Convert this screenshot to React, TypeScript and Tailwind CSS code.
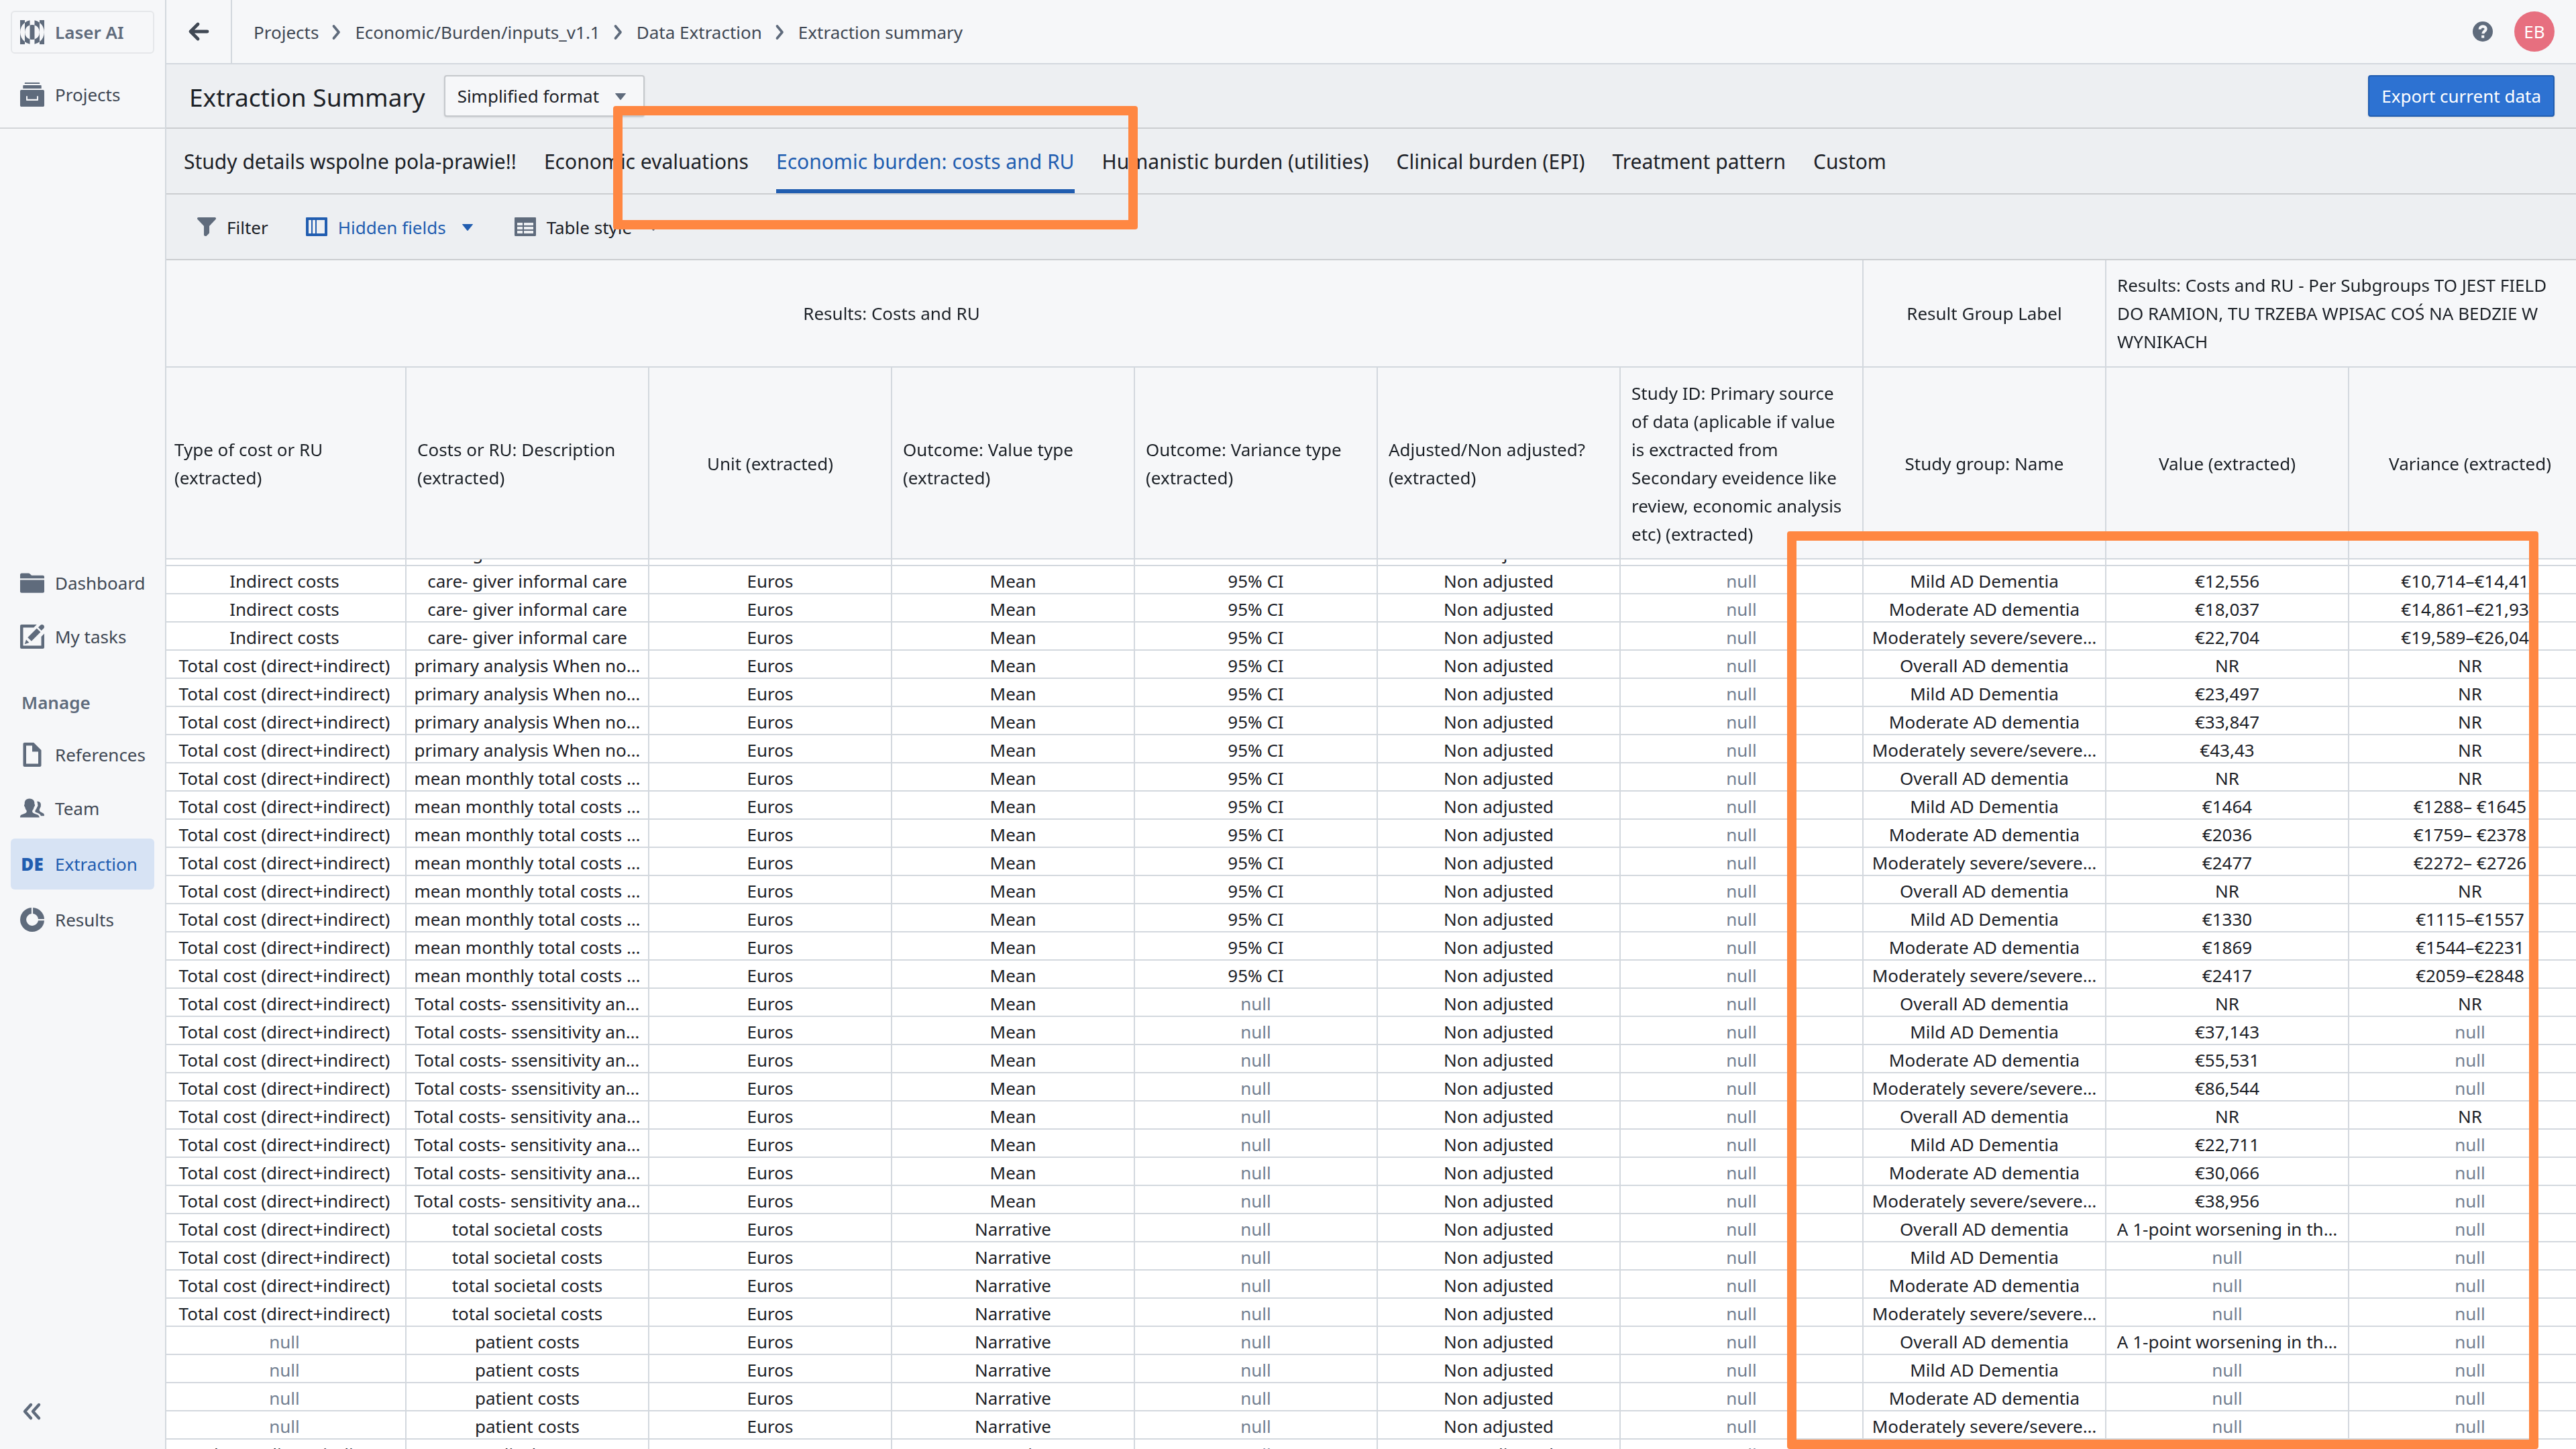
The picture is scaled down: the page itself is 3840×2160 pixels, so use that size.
import { useLayoutEffect, useRef, type ReactNode } from "react";

const TOTAL = "Total cost (direct+indirect)";
const OVERALL = "Overall AD dementia";
const MILD = "Mild AD Dementia";
const MODERATE = "Moderate AD dementia";
const SEVERE = "Moderately severe/severe…";
const WORSENING = "A 1-point worsening in th…";

const indirect = ["Indirect costs", "care- giver informal care", "Euros", "Mean", "95% CI"];
const primary = [TOTAL, "primary analysis When no…", "Euros", "Mean", "95% CI"];
const monthly = [TOTAL, "mean monthly total costs …", "Euros", "Mean", "95% CI"];
const ssensitivity = [TOTAL, "Total costs- ssensitivity an…", "Euros", "Mean", "null"];
const sensitivity = [TOTAL, "Total costs- sensitivity ana…", "Euros", "Mean", "null"];
const societal = [TOTAL, "total societal costs", "Euros", "Narrative", "null"];
const patient = ["null", "patient costs", "Euros", "Narrative", "null"];
const medical = [TOTAL, "medical costs", "Euros", "Narrative", "null"];

const data: [string[], string, string, string][] = [
    [indirect, OVERALL, "NR", "NR"],
    [indirect, MILD, "€12,556", "€10,714–€14,417"],
    [indirect, MODERATE, "€18,037", "€14,861–€21,939"],
    [indirect, SEVERE, "€22,704", "€19,589–€26,042"],
    [primary, OVERALL, "NR", "NR"],
    [primary, MILD, "€23,497", "NR"],
    [primary, MODERATE, "€33,847", "NR"],
    [primary, SEVERE, "€43,43", "NR"],
    [monthly, OVERALL, "NR", "NR"],
    [monthly, MILD, "€1464", "€1288– €1645"],
    [monthly, MODERATE, "€2036", "€1759– €2378"],
    [monthly, SEVERE, "€2477", "€2272– €2726"],
    [monthly, OVERALL, "NR", "NR"],
    [monthly, MILD, "€1330", "€1115–€1557"],
    [monthly, MODERATE, "€1869", "€1544–€2231"],
    [monthly, SEVERE, "€2417", "€2059–€2848"],
    [ssensitivity, OVERALL, "NR", "NR"],
    [ssensitivity, MILD, "€37,143", "null"],
    [ssensitivity, MODERATE, "€55,531", "null"],
    [ssensitivity, SEVERE, "€86,544", "null"],
    [sensitivity, OVERALL, "NR", "NR"],
    [sensitivity, MILD, "€22,711", "null"],
    [sensitivity, MODERATE, "€30,066", "null"],
    [sensitivity, SEVERE, "€38,956", "null"],
    [societal, OVERALL, WORSENING, "null"],
    [societal, MILD, "null", "null"],
    [societal, MODERATE, "null", "null"],
    [societal, SEVERE, "null", "null"],
    [patient, OVERALL, WORSENING, "null"],
    [patient, MILD, "null", "null"],
    [patient, MODERATE, "null", "null"],
    [patient, SEVERE, "null", "null"],
    [medical, OVERALL, "null", "null"],
];

const columns = [
    "Type of cost or RU (extracted)",
    "Costs or RU: Description (extracted)",
    "Unit (extracted)",
    "Outcome: Value type (extracted)",
    "Outcome: Variance type (extracted)",
    "Adjusted/Non adjusted? (extracted)",
    "Study ID: Primary source of data (aplicable if value is exctracted from Secondary eveidence like review, economic analysis etc) (extracted)",
    "Study group: Name",
    "Value (extracted)",
    "Variance (extracted)",
];

const tabs = [
    "Study details wspolne pola-prawie!!",
    "Economic evaluations",
    "Economic burden: costs and RU",
    "Humanistic burden (utilities)",
    "Clinical burden (EPI)",
    "Treatment pattern",
    "Custom",
];

const crumbs = ["Projects", "Economic/Burden/inputs_v1.1", "Data Extraction", "Extraction summary"];

function Icon({ children, className = "size-9", viewBox = "0 0 16 16" }: { children: ReactNode; className?: string; viewBox?: string }) {
    return (
        <svg viewBox={viewBox} fill="currentColor" fillRule="evenodd" className={`shrink-0 ${className}`} aria-hidden="true">
            {children}
        </svg>
    );
}

const icons = {
    logo: (
        <path d="M0 0H7V3.8A18 18 0 0 0 7 32.2V36H0zM7 3.8A18 18 0 0 1 14.5.3V7.6A11 11 0 0 0 14.5 28.4V35.7A18 18 0 0 1 7 32.2zM14.5 7.6A11 11 0 0 1 21.5 7.6V28.4A11 11 0 0 1 14.5 28.4zM29 3.8A18 18 0 0 0 21.5.3V7.6A11 11 0 0 1 21.5 28.4V35.7A18 18 0 0 0 29 32.2zM36 0H29V3.8A18 18 0 0 1 29 32.2V36H36z" />
    ),
    projects: <path d="M3.4 0h9.200c.2 0 .4.200.4.500V.9H3V.5c0-.3.200-.5.400-.5zM2.400 1.800h11.200c.3 0 .5.200.5.500V4H1.900V2.300c0-.3.200-.5.500-.5zM.8 4.900h14.400c.4 0 .8.400.8.800v9.500c0 .4-.4.800-.8.800H.8c-.4 0-.8-.4-.8-.8V5.700c0-.4.400-.8.800-.8zM4 9v2.500c0 .3.200.5.500.5h7c.3 0 .5-.2.500-.5V9h-.9v2H4.900V9z" />,
    folder: <path d="M0 2.500c0-.5.4-1 1-1h4.600c.3 0 .5.100.7.300L7.600 3H15c.6 0 1 .4 1 1v1H0zM0 6h16v7.500c0 .6-.4 1-1 1H1c-.6 0-1-.4-1-1z" />,
    tasks: <path d="M14 14H2V2h7l2-2H1C.4 0 0 .4 0 1v14c0 .6.4 1 1 1h14c.6 0 1-.4 1-1V6l-2 2zM4 10l-1 3 3-1zM11 2.500 5 8.500l2.500 2.500 6-6zM16 1.500C16 .7 15.300 0 14.500 0c-.4 0-.8.200-1.100.4L12 1.900 14.100 4l1.500-1.500c.2-.2.400-.6.400-1z" />,
    doc: <path d="M9 0H3c-.6 0-1 .4-1 1v14c0 .6.4 1 1 1h10c.6 0 1-.4 1-1V5zm3 14H4V2h4v4h4z" />,
    team: <path d="M12.800 14H0c0-.7.100-1.400.7-1.700 1.500-.7 3.300-1 3.600-2 .1-.4 0-.7-.1-1-.5-.5-.8-1.200-1-2.200-.4-.3-.6-.8-.5-1.300.1-.3.200-.5.300-.6C2.800 3.200 3.600 1.500 6.200 1.500s3.500 1.700 3.300 3.700c.2.100.3.300.3.600 0 .6-.3 1.100-.6 1.300-.2 1-.5 1.700-1 2.200-.1.300-.2.600-.1 1 .3 1 2.200 1.300 3.700 2 .6.300.9 1 1 1.700zM16 13h-2.300c-.3-1-.8-1.400-2-1.900l-1.500-.6c-.4-.3-.3-1 0-1.500.5-.6.900-1.300 1-1.800.5-.5.700-1.200.4-1.900 0-.5 0-1.300-.5-1.800C12.900 3.200 14 4.500 13.700 6c.1.600-.1 1.300-.5 1.700-.1.500-.3.900-.5 1.300.1 1.800 2.900 1.700 3.200 3z" />,
    donut: <path d="M7.500 0v4A4 4 0 1 0 12 8.500h4A8 8 0 1 1 7.500 0zM8.500 0A8 8 0 0 1 16 7.500h-4A4 4 0 0 0 8.500 4z" />,
    filter: <path d="M1 0h14c.6 0 1 .4 1 1 0 .3-.1.500-.3.700L10.300 7.400V13c0 .3-.1.500-.3.700l-2 2c-.7.600-2.300.2-2.300-.7V7.400L.3 1.700C-.3 1.100.1 0 1 0z" />,
    columns: <path d="M.6 0h14.800c.3 0 .6.300.6.600v12.800c0 .3-.3.600-.6.600H.6c-.3 0-.6-.3-.6-.6V.6C0 .3.300 0 .6 0zM2 2v10h2V2zM5 2v10h2V2zM8 2v10h6V2z" />,
    grid: <path d="M.6 0h14.800c.3 0 .6.300.6.600v12.800c0 .3-.3.600-.6.600H.6c-.3 0-.6-.3-.6-.6V.6C0 .3.300 0 .6 0zM2 4v2h4V4zM7 4v2h7V4zM2 7v2h4V7zM7 7v2h7V7zM2 10v2h4v-2zM7 10v2h7v-2z" />,
    caret: <path d="M.5 4h15c.5 0 .6.500.3.800L8.800 13.500c-.4.500-1.200.5-1.600 0L.2 4.800C-.1 4.500 0 4 .5 4z" />,
    chevron: <path d="m5 2 5 6-5 6" fill="none" stroke="currentColor" strokeWidth="2.500" strokeLinecap="round" strokeLinejoin="round" />,
    back: <path d="M14.500 8H2M7.500 2.500 2 8l5.500 5.500" fill="none" stroke="currentColor" strokeWidth="2.400" strokeLinecap="round" strokeLinejoin="round" />,
    collapse: <path d="M7 3 2.500 8 7 13M13 3 8.500 8l4.500 5" fill="none" stroke="currentColor" strokeWidth="2.200" strokeLinecap="round" strokeLinejoin="round" />,
    help: (
        <>
            <circle cx="8" cy="8" r="8" />
            <path d="M5.700 6.200c0-1.400 1-2.300 2.400-2.300s2.400.8 2.400 2.100c0 1.600-2.200 1.700-2.300 3.700" fill="none" stroke="#f6f7f9" strokeWidth="2.200" />
            <path d="M7 11h2.200v2.100H7z" fill="#f6f7f9" />
        </>
    ),
};

function NavItem({ label, icon, active = false }: { label: string; icon: ReactNode; active?: boolean }) {
    return (
        <a
            href="#"
            className={`flex items-center gap-4 rounded-md pl-3.5 ${active ? "h-[76px] bg-[#d7e3f4] text-[#215db0]" : "h-[70px] text-[#404854]"}`}
        >
            {icon}
            {label}
        </a>
    );
}

function Sidebar() {
    return (
        <aside className="flex w-[248px] shrink-0 flex-col border-r-2 border-[#d3d8de] bg-[#f6f7f9]">
            <div className="flex h-48 flex-col justify-between border-b-2 border-[#d3d5d9] px-4 pt-4 pb-3.5">
                <button type="button" className="flex h-16 items-center gap-4 rounded-md border-2 border-[#e5e7ea] px-3 font-semibold text-[#5f6b7c]">
                    <Icon viewBox="0 0 36 36">{icons.logo}</Icon>
                    Laser AI
                </button>
                <NavItem label="Projects" icon={<Icon className="size-9 text-[#5f6b7c]">{icons.projects}</Icon>} />
            </div>
            <nav className="mt-auto flex flex-col gap-2.5 px-4 pb-10 text-[#5f6b7c]">
                <NavItem label="Dashboard" icon={<Icon className="size-9 text-[#5f6b7c]">{icons.folder}</Icon>} />
                <NavItem label="My tasks" icon={<Icon className="size-9 text-[#5f6b7c]">{icons.tasks}</Icon>} />
                <h2 className="mt-5 flex h-[66px] items-center pl-4 font-semibold">Manage</h2>
                <NavItem label="References" icon={<Icon className="size-9 text-[#5f6b7c]">{icons.doc}</Icon>} />
                <NavItem label="Team" icon={<Icon className="size-9 text-[#5f6b7c]">{icons.team}</Icon>} />
                <NavItem label="Extraction" active icon={<b className="w-9 text-center font-['Open_Sans',sans-serif] font-extrabold">DE</b>} />
                <NavItem label="Results" icon={<Icon className="size-9 text-[#5f6b7c]">{icons.donut}</Icon>} />
            </nav>
            <button type="button" aria-label="Collapse sidebar" className="mt-auto mb-10 ml-8 size-8 text-[#5f6b7c]">
                <Icon className="size-8">{icons.collapse}</Icon>
            </button>
        </aside>
    );
}

function Header() {
    return (
        <header className="flex h-24 items-center border-b-2 border-[#d3d8de] bg-[#f6f7f9] pr-8 text-[#404854]">
            <button type="button" aria-label="Back" className="flex h-full w-[98px] items-center justify-center border-r-2 border-[#d3d8de]">
                <Icon className="size-8">{icons.back}</Icon>
            </button>
            <nav className="flex items-center gap-[15px] pt-0.5 pl-8">
                {crumbs.map((c, i) => (
                    <span key={c} className="flex items-center gap-[15px]">
                        {i > 0 && <Icon className="size-6 text-[#5f6b7c]">{icons.chevron}</Icon>}
                        <a href="#">{c}</a>
                    </span>
                ))}
            </nav>
            <button type="button" aria-label="Help" className="ml-auto text-[#5f6b7c]">
                <Icon className="size-[30px]">{icons.help}</Icon>
            </button>
            <button type="button" className="ml-8 size-[60px] rounded-full bg-[#e76f7f] text-white">EB</button>
        </header>
    );
}

function ResultsTable() {
    const scroller = useRef<HTMLDivElement>(null);

    useLayoutEffect(() => {
        scroller.current?.scrollTo(4, 32);
    }, []);

    return (
        <div ref={scroller} className="min-h-0 flex-1 overflow-auto bg-white [scrollbar-width:none]">
            <table className="w-[3620px] table-fixed border-separate border-spacing-0 text-center">
                <thead className="sticky top-0 z-10 bg-[#f6f7f9] leading-[42px]">
                    <tr className="h-40">
                        <th colSpan={7} className="border-r-2 border-b-2 border-[#d3d8de] pr-[362px] font-normal">Results: Costs and RU</th>
                        <th className="border-r-2 border-b-2 border-[#d3d8de] font-normal">Result Group Label</th>
                        <th colSpan={2} className="border-b-2 border-[#d3d8de] pr-8 pl-4 text-left font-normal">
                            Results: Costs and RU - Per Subgroups TO JEST FIELD DO RAMION, TU TRZEBA WPISAC COŚ NA BEDZIE W WYNIKACH
                        </th>
                    </tr>
                    <tr className="h-[286px]">
                        {columns.map((c) => (
                            <th key={c} className="border-r-2 border-b-2 border-[#d3d8de] px-4 pt-0.5 font-normal">
                                <span className="inline-block text-left">{c}</span>
                            </th>
                        ))}
                    </tr>
                </thead>
                <tbody>
                    {data.map(([base, group, value, variance], i) => (
                        <tr key={i} className="h-[42px]">
                            {[...base, "Non adjusted", "null", group, value, variance].map((cell, j) => (
                                <td
                                    key={j}
                                    className={`overflow-hidden border-r-2 border-b-2 border-[#d3d8de] p-0 pt-1 leading-[36px] whitespace-nowrap ${cell === "null" ? "text-[#738091]" : ""}`}
                                >
                                    {cell}
                                </td>
                            ))}
                        </tr>
                    ))}
                </tbody>
            </table>
        </div>
    );
}

export default function App() {
    return (
        <div className="relative flex h-screen overflow-hidden bg-[#edeff2] font-['Noto_Sans',sans-serif] text-[26px] leading-[40px] text-[#1c2127]">
            <Sidebar />
            <main className="flex min-w-0 flex-1 flex-col">
                <Header />
                <div className="flex h-24 items-center border-b-2 border-[#cbcdd1] pr-8 pl-[34px]">
                    <h1 className="pt-1 text-[37px]">Extraction Summary</h1>
                    <button type="button" className="ml-7 flex h-[62px] items-center gap-6 rounded-sm border-2 border-[#c5c8cc] bg-[#f6f7f9] pr-[26px] pl-[18px] shadow">
                        Simplified format
                        <Icon className="size-4 text-[#5f6b7c]">{icons.caret}</Icon>
                    </button>
                    <button type="button" className="ml-auto h-[62px] rounded-sm border-2 border-[#215db0] bg-[#2d72d2] px-[18px] text-white shadow">
                        Export current data
                    </button>
                </div>
                <div role="tablist" className="flex h-[98px] gap-[41px] border-b-2 border-[#cbcdd1] pl-[26px] text-[30px]">
                    {tabs.map((t, i) => (
                        <button
                            key={t}
                            type="button"
                            role="tab"
                            aria-selected={i === 2}
                            className={`border-b-6 border-transparent pt-2 whitespace-nowrap ${i === 2 ? "border-b-[#215db0] text-[#215db0]" : ""}`}
                        >
                            {t}
                        </button>
                    ))}
                </div>
                <div className="flex h-[98px] items-center border-b-2 border-[#cbcdd1] pl-[46px]">
                    <button type="button" className="flex items-center gap-4">
                        <Icon className="size-7 text-[#5f6b7c]">{icons.filter}</Icon>
                        <span className="pt-0.5">Filter</span>
                    </button>
                    <button type="button" className="ml-14 flex items-center gap-4 text-[#215db0]">
                        <Icon viewBox="0 0 16 14" className="h-7 w-8">{icons.columns}</Icon>
                        <span className="pt-0.5">Hidden fields</span>
                        <Icon className="ml-2 size-4">{icons.caret}</Icon>
                    </button>
                    <button type="button" className="ml-[62px] flex items-center gap-4">
                        <Icon viewBox="0 0 16 14" className="h-7 w-8 text-[#5f6b7c]">{icons.grid}</Icon>
                        <span className="pt-0.5">Table style</span>
                        <Icon className="ml-2 size-4 text-[#5f6b7c]">{icons.caret}</Icon>
                    </button>
                </div>
                <ResultsTable />
            </main>
            <div className="pointer-events-none absolute top-[158px] left-[914px] z-20 h-[184px] w-[782px] rounded-sm border-14 border-[#ff8742]" />
            <div className="pointer-events-none absolute top-[792px] left-[2664px] z-20 h-[1368px] w-[1120px] rounded-sm border-14 border-[#ff8742]" />
        </div>
    );
}
